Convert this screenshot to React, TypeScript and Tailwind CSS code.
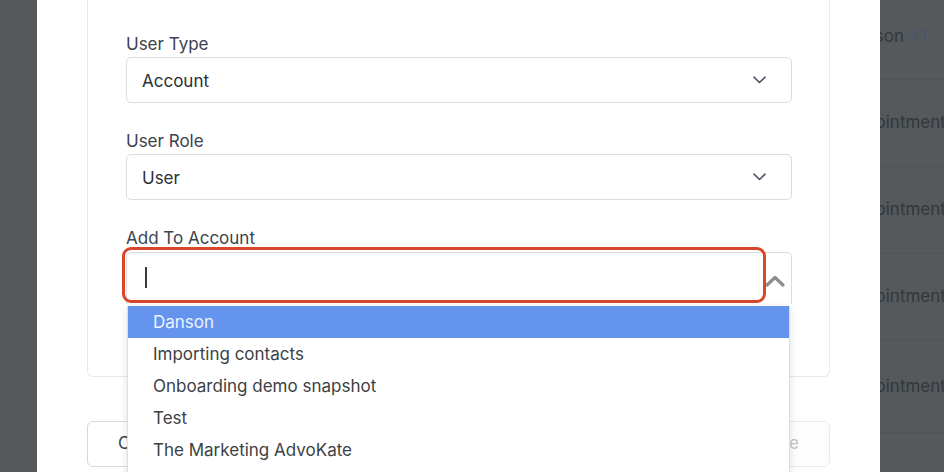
import { useState } from 'react';

const accounts = [
    'Danson',
    'Importing contacts',
    'Onboarding demo snapshot',
    'Test',
    'The Marketing AdvoKate',
    'Zen Dental',
];

function ChevronDown() {
    return (
        <svg width="13" height="8" viewBox="0 0 13 8" fill="none">
            <path d="M1 1.2 6.5 6.5 12 1.2" stroke="#4b5563" strokeWidth="1.6" strokeLinecap="round" strokeLinejoin="round" />
        </svg>
    );
}

function SelectField({ label, value }: { label: string; value: string }) {
    return (
        <div className="mb-[26px]">
            <div className="text-[17px] leading-6 text-[#3b4250] mb-[1px]">{label}</div>
            <div className="h-[46px] border border-[#d9dce1] rounded-[5px] pl-[15px] pr-[25px] flex items-center justify-between text-[17px] text-[#2a2f38]">
                <span className="pt-[3px]">{value}</span>
                <ChevronDown />
            </div>
        </div>
    );
}

export default function App() {
    const [active] = useState(0);

    return (
        <div className="h-[472px] w-[944px] overflow-hidden flex bg-[#55595c] font-['Inter','Liberation_Sans',sans-serif]">
            {/* left overlay */}
            <div className="w-[37px] shrink-0" />

            {/* modal */}
            <div className="w-[843px] shrink-0 bg-white px-[50px]">
                <div className="border-x border-b border-[#e6e8eb] rounded-b-md pl-[38px] pr-[37px] pt-[32px] pb-[72px]">
                    <SelectField label="User Type" value="Account" />
                    <SelectField label="User Role" value="User" />

                    <div className="text-[17px] leading-6 text-[#3b4250] mb-[2px]">Add To Account</div>
                    <div className="relative h-[52px] border border-[#d9dce1] border-b-0 rounded-t-[5px]">
                        {/* text cursor */}
                        <div className="absolute left-[18px] top-[14px] w-[2px] h-[21px] bg-[#3a3a3a]" />
                        {/* caret */}
                        <div className="absolute right-[6px] top-[22px]">
                            <svg width="20" height="12" viewBox="0 0 20 12" fill="none">
                                <path d="M2 10 10 2.5 18 10" stroke="#8c8c8c" strokeWidth="3.2" strokeLinecap="round" strokeLinejoin="round" />
                            </svg>
                        </div>
                        {/* highlight annotation */}
                        <div className="absolute left-[-5px] top-[-6px] w-[644px] h-[56px] border-[3px] border-[#d9472b] rounded-[9px]" />

                        {/* dropdown list */}
                        <div className="absolute left-[0px] right-[1px] top-[53px] h-[200px] bg-white border-x border-[#dcdfe3] shadow-[0_2px_8px_rgba(0,0,0,0.12)] z-10">
                            {accounts.map((name, i) => (
                                <div
                                    key={name}
                                    className={
                                        i === active
                                            ? 'h-8 flex items-center pl-[25px] pt-[2px] text-[17px] bg-[#6494ee] text-[#eef3ff]'
                                            : 'h-8 flex items-center pl-[25px] pt-[2px] text-[17px] text-[#3c3f44]'
                                    }
                                >
                                    {name}
                                </div>
                            ))}
                        </div>
                    </div>
                </div>

                {/* footer buttons */}
                <div className="mt-[44px] flex justify-between">
                    <button className="h-[46px] px-[30px] border border-[#d5d8dc] rounded-md text-[17px] text-[#3b4250]">
                        Cancel
                    </button>
                    <button className="h-[46px] px-[30px] border border-[#e8eaec] rounded-md text-[17px] text-[#c3c6ca] bg-[#fdfdfd]">
                        Save
                    </button>
                </div>
            </div>

            {/* right overlay with table behind */}
            <div className="flex-1 overflow-hidden text-[17px] text-[#33373a] whitespace-nowrap">
                <div className="-ml-[37px]">
                    <div className="h-[80px] pt-[24px] leading-6 border-b border-[#505457]">
                        Danson <span className="text-[#46566e]">+1</span>
                    </div>
                    <div className="h-[87px] flex items-center border-b border-[#505457]">Appointment</div>
                    <div className="h-[87px] flex items-center border-b border-[#505457]">Appointment</div>
                    <div className="h-[87px] flex items-center border-b border-[#505457]">Appointment</div>
                    <div className="h-[92px] flex items-center border-b border-[#505457]">Appointment</div>
                    <div className="h-[87px] border-b border-[#505457]" />
                </div>
            </div>
        </div>
    );
}
